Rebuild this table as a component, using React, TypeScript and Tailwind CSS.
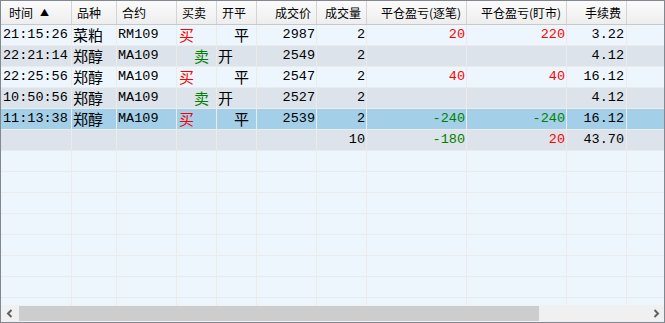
import React from "react";

type Row = {
  t: string;
  v: string;
  c: string;
  bs: string;
  oc: string;
  p: string;
  q: string;
  p1: string;
  p2: string;
  fee: string;
  sel?: boolean;
};

const rows: Row[] = [
  { t: "21:15:26", v: "菜粕", c: "RM109", bs: "买", oc: "平", p: "2987", q: "2", p1: "20", p2: "220", fee: "3.22" },
  { t: "22:21:14", v: "郑醇", c: "MA109", bs: "卖", oc: "开", p: "2549", q: "2", p1: "", p2: "", fee: "4.12" },
  { t: "22:25:56", v: "郑醇", c: "MA109", bs: "买", oc: "平", p: "2547", q: "2", p1: "40", p2: "40", fee: "16.12" },
  { t: "10:50:56", v: "郑醇", c: "MA109", bs: "卖", oc: "开", p: "2527", q: "2", p1: "", p2: "", fee: "4.12" },
  { t: "11:13:38", v: "郑醇", c: "MA109", bs: "买", oc: "平", p: "2539", q: "2", p1: "-240", p2: "-240", fee: "16.12", sel: true },
  { t: "", v: "", c: "", bs: "", oc: "", p: "", q: "10", p1: "-180", p2: "20", fee: "43.70" },
];

const mono = "font-['Liberation_Mono',monospace] text-[13.5px]";
const cjk = "font-['Noto_Sans_CJK_SC',sans-serif] text-[15px]";
const cell = "h-full shrink-0 border-r border-[#ebebeb] flex items-center overflow-hidden whitespace-nowrap";

function pnl(v: string) {
  if (!v) return "";
  return v.startsWith("-") ? "text-[#008000]" : "text-[#ff0000]";
}

function HeadCell({ w, label, right }: { w: string; label: React.ReactNode; right?: boolean }) {
  return (
    <div
      className={`${w} h-full shrink-0 flex items-center px-[5px] border-r border-[#d4d4d4] ${
        right ? "justify-end" : "justify-start"
      }`}
    >
      {label}
    </div>
  );
}

function DataRow({ r, bg }: { r: Row; bg: string }) {
  return (
    <div className={`flex h-[21px] shrink-0 border-b border-[#ebebeb] ${bg} text-black`}>
      <div className={`${cell} w-[71px] pl-[2px] ${mono}`}>{r.t}</div>
      <div className={`${cell} w-[45px] pl-[1px] ${cjk}`}>{r.v}</div>
      <div className={`${cell} w-[60px] pl-[1px] ${mono}`}>{r.c}</div>
      <div className={`${cell} w-[40px] ${cjk} ${r.bs === "买" ? "pl-[2px] text-[#ff0000]" : "pl-[17px] text-[#008000]"}`}>
        {r.bs}
      </div>
      <div className={`${cell} w-[40px] ${cjk} ${r.oc === "开" ? "pl-[1px]" : "pl-[17px]"}`}>{r.oc}</div>
      <div className={`${cell} w-[60px] justify-end pr-[1px] ${mono}`}>{r.p}</div>
      <div className={`${cell} w-[50px] justify-end pr-[1px] ${mono}`}>{r.q}</div>
      <div className={`${cell} w-[100px] justify-end pr-[1px] ${mono} ${pnl(r.p1)}`}>{r.p1}</div>
      <div className={`${cell} w-[100px] justify-end pr-[1px] ${mono} ${pnl(r.p2)}`}>{r.p2}</div>
      <div className={`${cell} w-[60px] justify-end pr-[2px] ${mono}`}>{r.fee}</div>
      <div className="flex-1" />
    </div>
  );
}

const empty: Row = { t: "", v: "", c: "", bs: "", oc: "", p: "", q: "", p1: "", p2: "", fee: "" };

export default function App() {
  return (
    <div className="w-[665px] h-[323px] border border-[#828790] bg-[#eef6fd] flex flex-col overflow-hidden">
      {/* Header */}
      <div className="flex h-[24px] shrink-0 border-b border-[#c9c9c9] bg-gradient-to-b from-[#fbfbfb] to-[#eeeeee] font-['Noto_Sans_CJK_SC',sans-serif] text-[12px] text-black">
        <HeadCell
          w="w-[71px]"
          label={
            <span className="pl-[3px] flex items-center">
              时间<span className="ml-[7px] text-[9px]">▲</span>
            </span>
          }
        />
        <HeadCell w="w-[45px]" label="品种" />
        <HeadCell w="w-[60px]" label="合约" />
        <HeadCell w="w-[40px]" label="买卖" />
        <HeadCell w="w-[40px]" label="开平" />
        <HeadCell w="w-[60px]" label="成交价" right />
        <HeadCell w="w-[50px]" label="成交量" right />
        <HeadCell w="w-[100px]" label="平仓盈亏(逐笔)" right />
        <HeadCell w="w-[100px]" label="平仓盈亏(盯市)" right />
        <HeadCell w="w-[60px]" label="手续费" right />
        <div className="flex-1" />
      </div>

      {/* Body */}
      <div className="flex-1 flex flex-col overflow-hidden">
        {rows.map((r, i) => (
          <DataRow key={i} r={r} bg={r.sel ? "bg-[#a3cfe8]" : i % 2 === 0 ? "bg-[#eef6fd]" : "bg-[#dde3ea]"} />
        ))}
        {Array.from({ length: 8 }).map((_, i) => (
          <DataRow key={`e${i}`} r={empty} bg="bg-[#eef6fd]" />
        ))}
      </div>

      {/* Horizontal scrollbar */}
      <div className="flex h-[17px] shrink-0 bg-[#f0f0f0]">
        <div className="w-[18px] h-full flex items-center justify-center">
          <svg width="8" height="9" viewBox="0 0 8 9">
            <path d="M5.5 1 L2 4.5 L5.5 8" fill="none" stroke="#606060" strokeWidth="2" />
          </svg>
        </div>
        <div className="w-[520px] my-[1px] bg-[#cdcdcd]" />
        <div className="flex-1" />
        <div className="w-[17px] h-full flex items-center justify-center">
          <svg width="8" height="9" viewBox="0 0 8 9">
            <path d="M2.5 1 L6 4.5 L2.5 8" fill="none" stroke="#606060" strokeWidth="2" />
          </svg>
        </div>
      </div>
    </div>
  );
}
